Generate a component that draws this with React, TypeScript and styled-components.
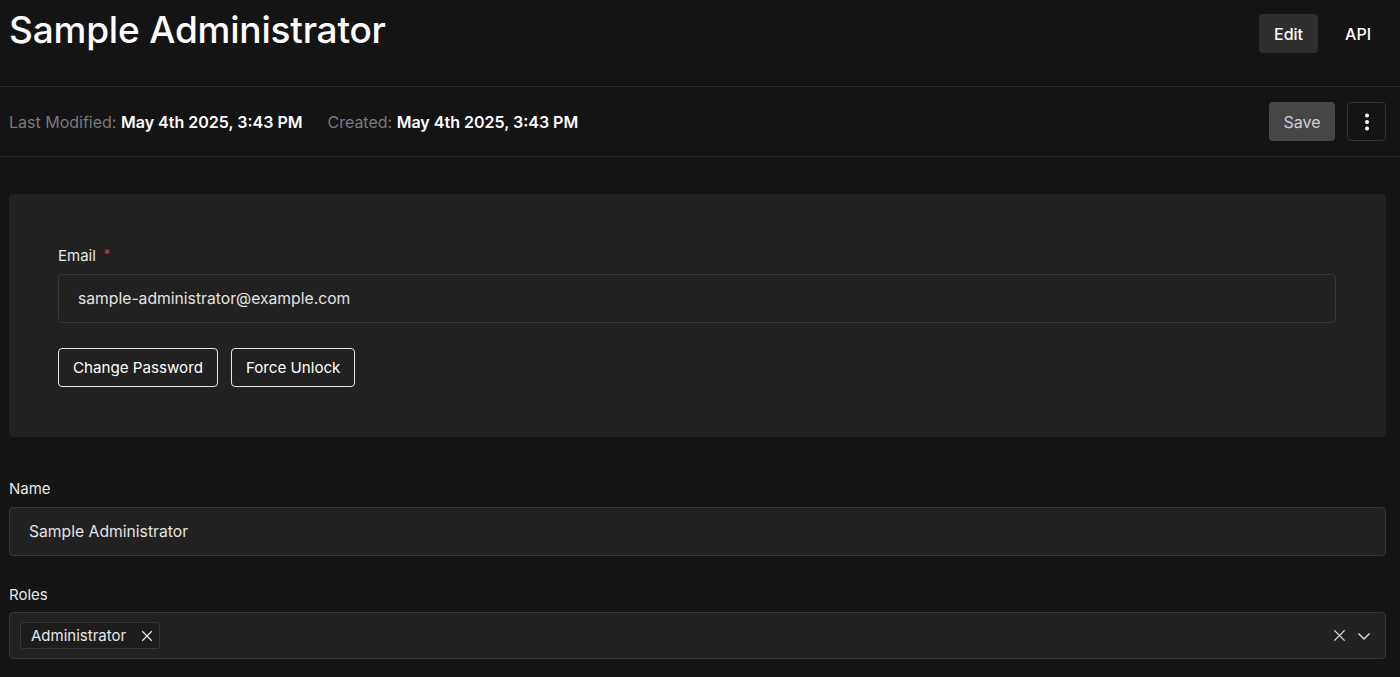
import styled, { createGlobalStyle } from "styled-components";


const GlobalStyle = createGlobalStyle`
	html, body {
		margin: 0;
		padding: 0;
		background: #141414;
		color: #ffffff;
		font-family: Inter, "Noto Sans", sans-serif;
	}

	* {
		box-sizing: border-box;
	}
`;


const PageSC = styled.div`
	padding: 0 14px 0 9px;
	min-height: 677px;
`;


const HeaderSC = styled.header`
	display: flex;
	justify-content: space-between;
	align-items: flex-start;
	height: 87px;
	border-bottom: 1px solid #2c2c2c;
	margin: 0 -14px 0 -9px;
	padding: 0 14px 0 9px;

	h1 {
		margin: 0;
		padding-top: 7px;
		font-size: 37px;
		font-weight: 500;
		letter-spacing: -0.2px;
	}
`;


const TabsSC = styled.nav`
	display: flex;
	gap: 12px;
	padding-top: 14px;
`;


const TabSC = styled.button<{ $active?: boolean }>`
	height: 39px;
	padding: 0 15px;
	border: none;
	border-radius: 4px;
	background: ${p => p.$active ? "#2e2e2e" : "transparent"};
	color: #ffffff;
	font-family: inherit;
	font-size: 16px;
	font-weight: 500;
`;


const MetaBarSC = styled.div`
	display: flex;
	align-items: center;
	justify-content: space-between;
	height: 70px;
	border-bottom: 1px solid #2c2c2c;
	margin: 0 -14px 0 -9px;
	padding: 0 14px 0 9px;
	font-size: 16px;

	.meta {
		display: flex;
		gap: 25px;
	}

	.key {
		color: #7a7a7a;
	}

	.value {
		font-weight: 600;
		color: #ffffff;
	}
`;


const ActionsSC = styled.div`
	display: flex;
	gap: 12px;
`;


const SaveButtonSC = styled.button`
	height: 39px;
	width: 66px;
	border: none;
	border-radius: 4px;
	background: #464646;
	color: #d0d0d0;
	font-family: inherit;
	font-size: 16px;
`;


const MenuButtonSC = styled.button`
	display: flex;
	align-items: center;
	justify-content: center;
	width: 39px;
	height: 39px;
	border: 1px solid #333333;
	border-radius: 4px;
	background: #141414;
	color: #ffffff;
`;


const CardSC = styled.section`
	margin-top: 37px;
	background: #212121;
	border-radius: 4px;
	padding: 52px 50px 50px 49px;
`;


const FieldSC = styled.div<{ $gap?: number }>`
	display: flex;
	flex-direction: column;
	gap: ${p => p.$gap ?? 9}px;
`;


const LabelSC = styled.label`
	font-size: 15px;
	color: #e8e8e8;

	.required {
		color: #d43b3b;
		margin-left: 8px;
		font-size: 13px;
		vertical-align: top;
	}
`;


const InputSC = styled.div<{ $height?: number }>`
	display: flex;
	align-items: center;
	height: ${p => p.$height ?? 49}px;
	padding: 0 19px;
	background: #212121;
	border: 1px solid #363636;
	border-radius: 4px;
	font-size: 15.7px;
	color: #e4e4e4;
`;


const ButtonRowSC = styled.div`
	display: flex;
	gap: 13px;
	margin-top: 25px;
`;


const OutlineButtonSC = styled.button`
	height: 39px;
	padding: 0 14px;
	background: transparent;
	border: 1px solid #e6e6e6;
	border-radius: 4px;
	color: #ffffff;
	font-family: inherit;
	font-size: 15.15px;
`;


const FormSC = styled.div`
	display: flex;
	flex-direction: column;
	gap: 29px;
	margin-top: 42px;
`;


const SelectSC = styled(InputSC)`
	padding: 0 14px 0 10px;
	justify-content: space-between;
`;


const TagSC = styled.span`
	display: flex;
	align-items: center;
	gap: 15px;
	height: 27px;
	padding: 0 6px 0 10px;
	border: 1px solid #363636;
	border-radius: 3px;
	background: #1c1c1c;
	font-size: 15px;
	color: #e8e8e8;
`;


const IndicatorsSC = styled.div`
	display: flex;
	align-items: center;
	gap: 11px;
	color: #e0e0e0;
`;


function CrossIcon({ size = 14 }: { size?: number })
{
	return (
		<svg width={size} height={size} viewBox="0 0 14 14" fill="none" stroke="currentColor" strokeWidth="1.4">
			<path d="M1.5 1.5 L12.5 12.5 M12.5 1.5 L1.5 12.5" />
		</svg>
	);
}


function ChevronIcon()
{
	return (
		<svg width="14" height="14" viewBox="0 0 14 14" fill="none" stroke="currentColor" strokeWidth="1.4">
			<path d="M1.5 4.5 L7 10 L12.5 4.5" />
		</svg>
	);
}


function DotsIcon()
{
	return (
		<svg width="4" height="18" viewBox="0 0 4 18" fill="currentColor">
			<circle cx="2" cy="2.5" r="2" />
			<circle cx="2" cy="9" r="2" />
			<circle cx="2" cy="15.5" r="2" />
		</svg>
	);
}


export default function App()
{
	return (
		<PageSC>
			<GlobalStyle />

			<HeaderSC>
				<h1>Sample Administrator</h1>
				<TabsSC>
					<TabSC $active>Edit</TabSC>
					<TabSC>API</TabSC>
				</TabsSC>
			</HeaderSC>

			<MetaBarSC>
				<div className="meta">
					<span><span className="key">Last Modified: </span><span className="value">May 4th 2025, 3:43 PM</span></span>
					<span><span className="key">Created: </span><span className="value">May 4th 2025, 3:43 PM</span></span>
				</div>
				<ActionsSC>
					<SaveButtonSC>Save</SaveButtonSC>
					<MenuButtonSC><DotsIcon /></MenuButtonSC>
				</ActionsSC>
			</MetaBarSC>

			<CardSC>
				<FieldSC>
					<LabelSC>Email<span className="required">*</span></LabelSC>
					<InputSC>sample-administrator@example.com</InputSC>
				</FieldSC>
				<ButtonRowSC>
					<OutlineButtonSC>Change Password</OutlineButtonSC>
					<OutlineButtonSC>Force Unlock</OutlineButtonSC>
				</ButtonRowSC>
			</CardSC>

			<FormSC>
				<FieldSC>
					<LabelSC>Name</LabelSC>
					<InputSC>Sample Administrator</InputSC>
				</FieldSC>
				<FieldSC $gap={8}>
					<LabelSC>Roles</LabelSC>
					<SelectSC $height={47}>
						<TagSC>Administrator<CrossIcon size={12} /></TagSC>
						<IndicatorsSC>
							<CrossIcon size={13} />
							<ChevronIcon />
						</IndicatorsSC>
					</SelectSC>
				</FieldSC>
			</FormSC>
		</PageSC>
	);
}
